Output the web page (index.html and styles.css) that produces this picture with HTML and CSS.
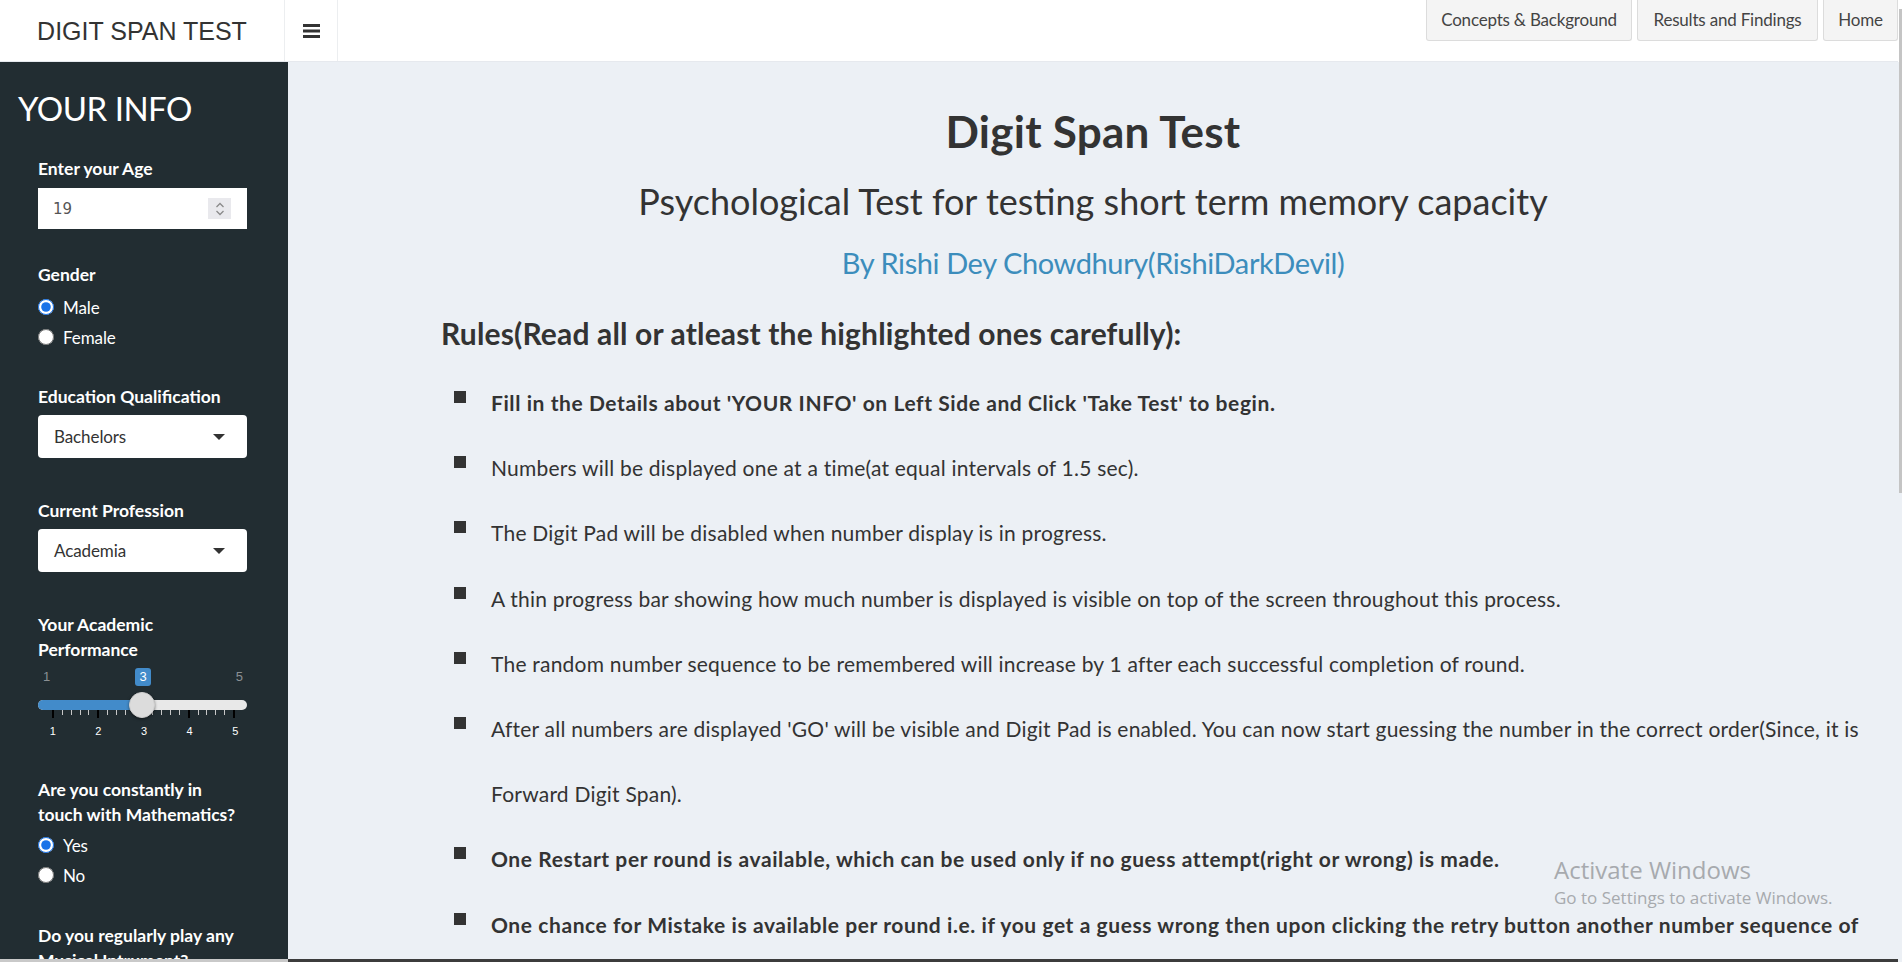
FILE: index.html
```html
<!DOCTYPE html>
<html lang="en">
<head>
<meta charset="utf-8">
<title>Digit Span Test</title>
<link rel="stylesheet" href="styles.css">
</head>
<body>
<div class="page">
  <header class="topbar">
    <div class="logo">DIGIT SPAN TEST</div>
    <div class="toggle">
      <svg width="17" height="15" viewBox="0 0 17 15"><rect x="0" y="1" width="17" height="3" fill="#333"/><rect x="0" y="6.5" width="17" height="3" fill="#333"/><rect x="0" y="12" width="17" height="3" fill="#333"/></svg>
    </div>
    <nav class="tabs">
      <a class="tab tab-concepts">Concepts &amp; Background</a>
      <a class="tab tab-results">Results and Findings</a>
      <a class="tab tab-home">Home</a>
    </nav>
  </header>
  <div class="body">
    <aside class="sidebar">
      <h2 class="side-title">YOUR INFO</h2>
      <div class="group g-age">
        <div class="label">Enter your Age</div>
        <div class="numbox">
          <span class="numval">19</span>
          <span class="spin">
            <svg width="10" height="16" viewBox="0 0 10 16"><path d="M1.5 6 L5 2.5 L8.5 6" fill="none" stroke="#8a8a8a" stroke-width="1.3"/><path d="M1.5 10 L5 13.5 L8.5 10" fill="none" stroke="#8a8a8a" stroke-width="1.3"/></svg>
          </span>
        </div>
      </div>
      <div class="group g-gender">
        <div class="label">Gender</div>
        <label class="radio r-first"><input type="radio" name="g" checked><span>Male</span></label>
        <label class="radio"><input type="radio" name="g"><span>Female</span></label>
      </div>
      <div class="group g-edu">
        <div class="label">Education Qualification</div>
        <div class="select"><span>Bachelors</span><i class="caret"></i></div>
      </div>
      <div class="group g-prof">
        <div class="label">Current Profession</div>
        <div class="select"><span>Academia</span><i class="caret"></i></div>
      </div>
      <div class="group g-acad">
        <div class="label">Your Academic<br>Performance</div>
        <div class="slider">
          <div class="minmax"><span>1</span><span>5</span></div>
          <div class="track">
            <div class="fill" style="width:104px"></div>
            <div class="bubble">3</div>
            <div class="handle"></div>
          </div>
          <div class="ticks">
            <i class="maj"></i><i></i><i></i><i></i><i></i>
            <i class="maj"></i><i></i><i></i><i></i><i></i>
            <i class="maj"></i><i></i><i></i><i></i><i></i>
            <i class="maj"></i><i></i><i></i><i></i><i></i>
            <i class="maj"></i>
          </div>
          <div class="ticklabels"><span>1</span><span>2</span><span>3</span><span>4</span><span>5</span></div>
        </div>
      </div>
      <div class="group g-math">
        <div class="label">Are you constantly in<br>touch with Mathematics?</div>
        <label class="radio r-first r-tight"><input type="radio" name="m" checked><span>Yes</span></label>
        <label class="radio"><input type="radio" name="m"><span>No</span></label>
      </div>
      <div class="group g-music">
        <div class="label">Do you regularly play any<br>Musical Intrument?</div>
      </div>
    </aside>
    <main class="content">
      <h1 class="title">Digit Span Test</h1>
      <h2 class="subtitle">Psychological Test for testing short term memory capacity</h2>
      <h3 class="author">By Rishi Dey Chowdhury(RishiDarkDevil)</h3>
      <h3 class="rules-head">Rules(Read all or atleast the highlighted ones carefully):</h3>
      <ul class="rules">
        <li class="strong">Fill in the Details about 'YOUR INFO' on Left Side and Click 'Take Test' to begin.</li>
        <li>Numbers will be displayed one at a time(at equal intervals of 1.5 sec).</li>
        <li>The Digit Pad will be disabled when number display is in progress.</li>
        <li>A thin progress bar showing how much number is displayed is visible on top of the screen throughout this process.</li>
        <li>The random number sequence to be remembered will increase by 1 after each successful completion of round.</li>
        <li>After all numbers are displayed 'GO' will be visible and Digit Pad is enabled. You can now start guessing the number in the correct order(Since, it is Forward Digit Span).</li>
        <li class="strong">One Restart per round is available, which can be used only if no guess attempt(right or wrong) is made.</li>
        <li class="strong">One chance for Mistake is available per round i.e. if you get a guess wrong then upon clicking the retry button another number sequence of the same length is displayed.</li>
      </ul>
    </main>
  </div>
  <div class="bottomline"><span class="bl-left"></span><span class="bl-right"></span></div>
</div>
<div class="scrollbar"><div class="thumb"></div></div>
<div class="watermark">
  <div class="wm-big">Activate Windows</div>
  <div class="wm-small">Go to Settings to activate Windows.</div>
</div>
</body>
</html>
```
FILE: styles.css
```css
* { box-sizing: border-box; }
html, body { margin: 0; padding: 0; }
body {
  width: 1902px;
  height: 962px;
  overflow: hidden;
  display: flex;
  position: relative;
  font-family: Lato, "Noto Sans", sans-serif;
  color: #333;
  background: #ecf0f5;
}
.page { flex: 1; display: flex; flex-direction: column; min-width: 0; }

/* header */
.topbar {
  height: 62px;
  flex: none;
  background: #fff;
  display: flex;
  align-items: stretch;
  border-bottom: 1px solid #e6e9ee;
}
.logo {
  width: 284px;
  display: flex;
  align-items: center;
  justify-content: center;
  font-family: "Liberation Sans", Arial, sans-serif;
  font-size: 25px;
  color: #333;
  padding-top: 2px;
}
.toggle {
  width: 54px;
  border-left: 1px solid #eceef0;
  border-right: 1px solid #eceef0;
  display: flex;
  align-items: center;
  justify-content: center;
}
.tabs { margin-left: auto; display: flex; gap: 5px; align-items: flex-start; }
.tab {
  height: 41px;
  display: flex;
  align-items: center;
  justify-content: center;
  background: #f4f4f4;
  border: 1px solid #dcdcdc;
  border-top: none;
  border-radius: 0 0 3px 3px;
  color: #444;
  font-size: 17px;
  letter-spacing: -0.2px;
  padding-bottom: 1px;
}
.tab-concepts { width: 206px; }
.tab-results { width: 181px; }
.tab-home { width: 75px; }

.body { flex: 1; display: flex; min-height: 0; }

/* sidebar */
.sidebar {
  width: 288px;
  flex: none;
  background: #222d32;
  color: #fff;
  padding: 24px 0 0 0;
  overflow: hidden;
}
.side-title {
  margin: 0 0 0 18px;
  font-size: 33px;
  line-height: 44px;
  font-weight: 400;
  letter-spacing: -0.5px;
}
.group { padding-left: 38px; width: 247px; }
.label {
  font-weight: 700;
  font-size: 17.5px;
  line-height: 25px;
  letter-spacing: 0;
}
.g-age { margin-top: 26px; }
.g-gender { margin-top: 33px; }
.g-edu { margin-top: 32px; }
.g-prof { margin-top: 40px; }
.g-acad { margin-top: 40px; }
.g-math { margin-top: 26px; }
.g-music { margin-top: 33px; }

.numbox {
  margin-top: 7px;
  height: 41px;
  background: #fff;
  display: flex;
  align-items: center;
  padding: 0 16px 0 15px;
}
.numval { font-family: "DejaVu Sans", sans-serif; font-size: 15px; color: #555; }
.spin {
  margin-left: auto;
  width: 23px;
  height: 21px;
  background: #e9e9ed;
  display: flex;
  align-items: center;
  justify-content: center;
}
.radio {
  display: flex;
  align-items: center;
  height: 30px;
  font-size: 17px;
  letter-spacing: -0.1px;
}
.r-first { margin-top: 5px; }
.r-first.r-tight { margin-top: 3px; }
.radio input { width: 16px; height: 16px; margin: 0 9px 0 0; accent-color: #1a73e8; }

.select {
  margin-top: 6px;
  height: 43px;
  background: #fff;
  border-radius: 4px;
  display: flex;
  align-items: center;
  padding: 0 22px 0 16px;
  color: #333;
  font-size: 17px;
  letter-spacing: -0.1px;
}
.caret {
  margin-left: auto;
  width: 0;
  height: 0;
  border-left: 6px solid transparent;
  border-right: 6px solid transparent;
  border-top: 6px solid #333;
}

/* slider */
.slider { height: 83px; width: 209px; }
.minmax {
  margin-top: 6px;
  height: 17px;
  display: flex;
  justify-content: space-between;
  padding: 0 4px 0 5px;
  font-family: "Liberation Sans", Arial, sans-serif;
  font-size: 13px;
  line-height: 17px;
  color: #8b9094;
}
.track {
  position: relative;
  margin-top: 15px;
  height: 10px;
  border-radius: 5px;
  background: #e8e8e8;
}
.fill { height: 10px; border-radius: 5px 0 0 5px; background: #428bca; }
.bubble {
  position: absolute;
  left: 97px;
  top: -32px;
  width: 16px;
  height: 18px;
  background: #428bca;
  border-radius: 3px;
  color: #fff;
  font-family: "Liberation Sans", Arial, sans-serif;
  font-size: 13px;
  line-height: 18px;
  text-align: center;
}
.handle {
  position: absolute;
  left: 91px;
  top: -8px;
  width: 26px;
  height: 26px;
  border-radius: 50%;
  background: #dcdcdc;
  border: 1px solid #cfcfcf;
  box-shadow: 0 1px 3px rgba(0,0,0,0.5);
}
.ticks {
  margin-left: 14px;
  width: 183px;
  height: 8px;
  display: flex;
  justify-content: space-between;
  align-items: flex-start;
}
.ticks i { width: 1px; height: 5px; background: #c8c8c8; }
.ticks i.maj { height: 8px; background: #000; width: 2px; }
.ticklabels {
  margin-left: -8px;
  width: 228px;
  display: grid;
  grid-template-columns: repeat(5, 1fr);
  text-align: center;
  font-family: "Liberation Sans", Arial, sans-serif;
  font-size: 11px;
  line-height: 18px;
  margin-top: 4px;
  color: #fff;
}

/* content */
.content {
  flex: 1;
  min-width: 0;
  padding: 42px 0 0 0;
  overflow: hidden;
}
.title {
  margin: 0;
  text-align: center;
  font-size: 44px;
  line-height: 54px;
  font-weight: 700;
  letter-spacing: 0.25px;
}
.subtitle {
  margin: 21px 0 0;
  text-align: center;
  font-size: 36px;
  line-height: 44px;
  font-weight: 400;
  letter-spacing: 0;
}
.author {
  margin: 22px 0 0;
  text-align: center;
  font-size: 29px;
  line-height: 36px;
  font-weight: 400;
  color: #3c8dbc;
  letter-spacing: -0.4px;
}
.rules-head {
  margin: 33px 0 0 153px;
  font-size: 30px;
  line-height: 38px;
  font-weight: 700;
  letter-spacing: 0.15px;
}
.rules {
  list-style: none;
  margin: 18px 0 0 166px;
  padding: 0 26px 0 0;
}
.rules li {
  display: grid;
  grid-template-columns: 37px 1fr;
  font-size: 21px;
  line-height: 65.2px;
  letter-spacing: 0.22px;
}
.rules li::before {
  content: "";
  width: 12px;
  height: 12px;
  background: #333;
  margin-top: 21px;
}
.rules li.strong { font-weight: 700; letter-spacing: 0.58px; }

.bottomline { height: 3px; flex: none; display: flex; }
.bl-left { width: 288px; background: #c9c9c9; }
.bl-right { flex: 1; background: #3c3c3c; }

.scrollbar {
  width: 4px;
  flex: none;
  background: linear-gradient(#fff 0, #fff 62px, #ecf0f5 62px);
  padding-top: 9px;
}
.thumb { height: 484px; background: #c4c4c4; margin-left: 1px; width: 3px; }

.watermark {
  position: absolute;
  left: 1554px;
  top: 855px;
  font-family: "Open Sans", "Noto Sans", sans-serif;
  color: #a7aaae;
}
.wm-big { font-size: 24px; line-height: 30px; }
.wm-small { font-size: 17px; line-height: 26px; }
```
